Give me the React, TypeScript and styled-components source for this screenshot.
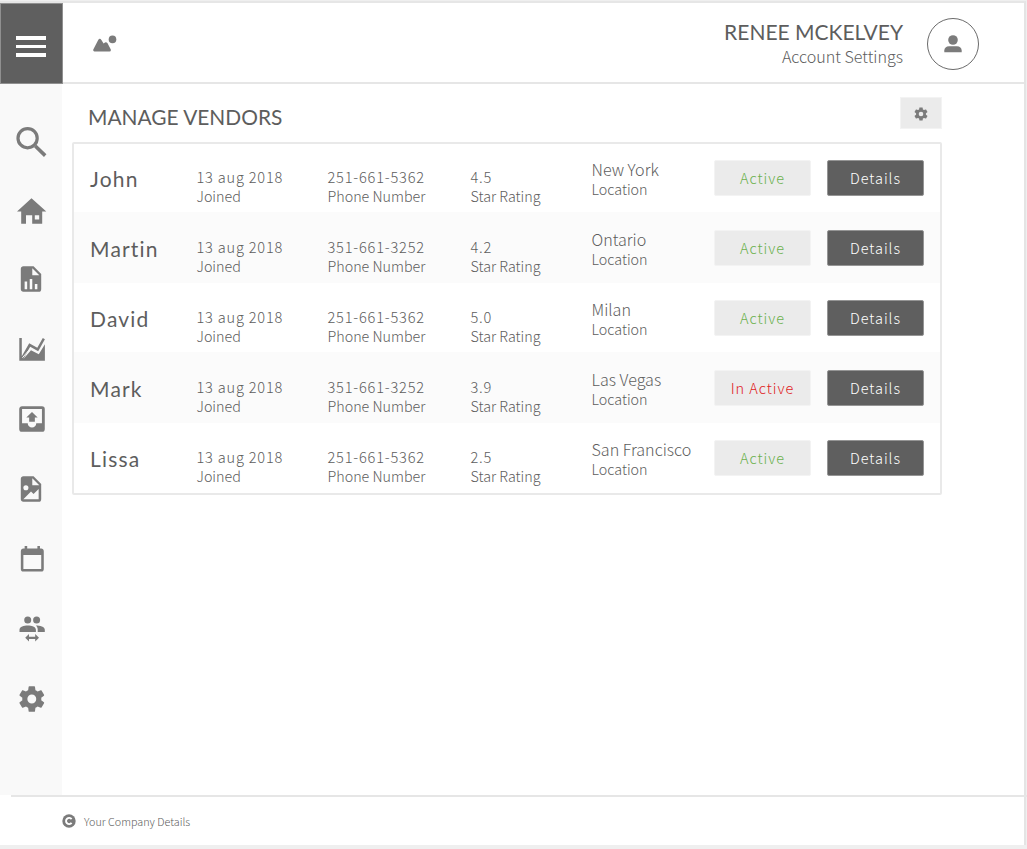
import React from "react";
import styled, { createGlobalStyle } from "styled-components";

const Global = createGlobalStyle`
  * { box-sizing: border-box; }
  body { margin: 0; background: #efefef; color: #5d5d5d; font-family: Lato, sans-serif; }
`;

const light = `font-family: "Noto Sans CJK SC", sans-serif; font-weight: 300;`;

const Frame = styled.div`
  width: 1027px;
  height: 849px;
  overflow: hidden;
  border-top: 1px solid #efefef;
  background: #efefef;
`;
const Page = styled.div`
  width: 1026px;
  height: 844px;
  border-top: 2px solid #e6e6e6;
  border-right: 2px solid #e4e4e4;
  background: #fff;
`;
const Header = styled.header`
  display: flex;
  height: 81px;
`;
const MenuButton = styled.button`
  display: flex;
  flex-direction: column;
  align-items: center;
  justify-content: center;
  gap: 5px;
  width: 63px;
  height: 81px;
  padding: 6px 1px 0 0;
  border: 1px solid #909090;
  background: #5f5f5f;
`;
const Bar = styled.span`
  width: 30px;
  height: 3.5px;
  background: #fff;
`;
const HeaderMain = styled.div`
  flex: 1;
  display: flex;
  padding-left: 30px;
  border-bottom: 2px solid #e6e6e6;
`;
const Logo = styled.svg`
  margin-top: 31px;
  fill: #7b7b7b;
`;
const Account = styled.div`
  margin-left: auto;
  padding-top: 15px;
  text-align: right;
`;
const UserName = styled.div`
  font-size: 21px;
  line-height: 28px;
  white-space: nowrap;
`;
const UserLink = styled.div`
  ${light}
  font-size: 16.1px;
  line-height: 21px;
  white-space: nowrap;
`;
const Avatar = styled.div`
  display: flex;
  align-items: center;
  justify-content: center;
  width: 52px;
  height: 52px;
  margin: 15px 45px 0 24px;
  border: 1px solid #6b6b6b;
  border-radius: 50%;
`;
const Body = styled.div`
  display: flex;
  height: 711px;
`;
const Sidebar = styled.nav`
  width: 62px;
  padding-top: 20px;
  background: #f9f9f9;
`;
const NavItem = styled.div`
  display: flex;
  align-items: center;
  justify-content: center;
  height: 70px;
  color: #7b7b7b;
`;
const Content = styled.main`
  width: 880px;
  padding-left: 10px;
`;
const TitleBar = styled.div`
  display: flex;
  justify-content: space-between;
  width: 870px;
  height: 58px;
  padding: 13px 0 0 16px;
`;
const Title = styled.h1`
  margin: 6px 0 0;
  font-size: 20.9px;
  line-height: 28px;
  font-weight: 400;
`;
const GearButton = styled.button`
  display: flex;
  align-items: center;
  justify-content: center;
  width: 42px;
  height: 32px;
  padding: 1px 0 0;
  border: 1px solid #f3f3f3;
  background: #ebebeb;
  color: #7b7b7b;
`;
const Table = styled.div`
  width: 870px;
  height: 353px;
  border: 2px solid #e9e9e9;
  border-radius: 2px;
`;
const Row = styled.div<{ $striped: boolean }>`
  display: flex;
  height: 70px;
  padding-left: 16px;
  background: ${(p) => (p.$striped ? "#fbfbfb" : "transparent")};
  box-shadow: ${(p) => (p.$striped ? "0 1px 0 #fbfbfb" : "none")};
  &:first-child { margin-top: -2px; }
`;
const Name = styled.div`
  width: 106.5px;
  padding-top: 23px;
  font-size: 21px;
  line-height: 28px;
  letter-spacing: 1.2px;
`;
const Cell = styled.div<{ $width: number }>`
  width: ${(p) => p.$width}px;
  padding-top: 25px;
  ${light}
  font-size: 14.3px;
  line-height: 19px;
  white-space: nowrap;
`;
const Figure = styled.div`
  font-size: 14.6px;
  letter-spacing: 0.8px;
`;
const PlaceCell = styled(Cell)`
  padding-top: 17px;
`;
const Place = styled.div`
  margin-bottom: -1px;
  font-size: 16.1px;
  line-height: 21px;
`;
const Pill = styled.button<{ $tone: "active" | "inactive" | "dark" }>`
  width: 97px;
  height: 36px;
  margin: 18px 16px 0 0;
  padding: 0 0 1px;
  border: 1px solid ${(p) => (p.$tone === "dark" ? "#959595" : "#f3f3f3")};
  border-radius: 2px;
  background: ${(p) => (p.$tone === "dark" ? "#5f5f5f" : "#ebebeb")};
  color: ${(p) => ({ active: "#6ab04c", inactive: "#e01b1b", dark: "#fff" })[p.$tone]};
  ${light}
  font-size: 14.5px;
  line-height: 20px;
  letter-spacing: 0.95px;
`;
const Footer = styled.footer`
  position: relative;
  display: flex;
  align-items: center;
  gap: 8px;
  width: 1016px;
  height: 50px;
  margin-left: 11px;
  padding: 0 0 0 51px;
  border-top: 2px solid #e6e6e6;
  ${light}
  font-size: 10.8px;
`;

const GEAR =
  "M12,15.5A3.5,3.5 0 0,1 8.5,12A3.5,3.5 0 0,1 12,8.5A3.5,3.5 0 0,1 15.5,12A3.5,3.5 0 0,1 12,15.5M19.43,12.97C19.47,12.65 19.5,12.33 19.5,12C19.5,11.67 19.47,11.34 19.43,11L21.54,9.37C21.73,9.22 21.78,8.95 21.66,8.73L19.66,5.27C19.54,5.05 19.27,4.96 19.05,5.05L16.56,6.05C16.04,5.66 15.5,5.32 14.87,5.07L14.5,2.42C14.46,2.18 14.25,2 14,2H10C9.75,2 9.54,2.18 9.5,2.42L9.13,5.07C8.5,5.32 7.96,5.66 7.44,6.05L4.95,5.05C4.73,4.96 4.46,5.05 4.34,5.27L2.34,8.73C2.21,8.95 2.27,9.22 2.46,9.37L4.57,11C4.53,11.34 4.5,11.67 4.5,12C4.5,12.33 4.53,12.65 4.57,12.97L2.46,14.63C2.27,14.78 2.21,15.05 2.34,15.27L4.34,18.73C4.46,18.95 4.73,19.03 4.95,18.95L7.44,17.94C7.96,18.34 8.5,18.68 9.13,18.93L9.5,21.58C9.54,21.82 9.75,22 10,22H14C14.25,22 14.46,21.82 14.5,21.58L14.87,18.93C15.5,18.67 16.04,18.34 16.56,17.94L19.05,18.95C19.27,19.03 19.54,18.95 19.66,18.73L21.66,15.27C21.78,15.05 21.73,14.78 21.54,14.63L19.43,12.97Z";
const FILE =
  "M13,9H18.5L13,3.5V9M6,2H14L20,8V20A2,2 0 0,1 18,22H6C4.89,22 4,21.1 4,20V4C4,2.89 4.89,2 6,2";

const icons: { id: string; art: React.ReactNode }[] = [
  {
    id: "search",
    art: (
      <g fill="none" stroke="currentColor">
        <circle cx="14.6" cy="17.2" r="9.6" strokeWidth="3.2" />
        <path d="M22.3 25L32.2 34.6" strokeWidth="3.6" />
      </g>
    ),
  },
  {
    id: "home",
    art: (
      <path
        fillRule="evenodd"
        d="M18.5 7.3L33.3 20.5H29.2V32.8H19.2V24.2H13V32.8H8.2V20.5H4ZM21.8 24.2V28.4H26.2V24.2Z"
      />
    ),
  },
  {
    id: "report",
    art: (
      <path
        transform="translate(18 18) scale(1.275) translate(-12 -12)"
        d={FILE + "M7,20H9V14H7V20M11,20H13V12H11V20M15,20H17V16H15V20Z"}
      />
    ),
  },
  {
    id: "chart",
    art: (
      <>
        <path d="M6.3 7H8.8V25.3L16.2 12.2L24.3 16.8L29.8 7L31.9 8.2L25.2 20.2L17.2 15.7L10.2 28.2L11 27.2L18 19.3L25.8 23.2L31.9 13.2V29.7H6.3Z" />
        <path d="M9.4 26.8L17.4 17.4L25.5 21.7L31.6 11.8" fill="none" stroke="#f9f9f9" strokeWidth="1" />
      </>
    ),
  },
  {
    id: "outbox",
    art: (
      <path
        transform="translate(19 18) scale(1.42) translate(-12 -12)"
        d="M14,14H10V11H8L12,7L16,11H14V14M5,15V5H19V15H15A3,3 0 0,1 12,18A3,3 0 0,1 9,15H5M19,3H5C3.89,3 3,3.9 3,5V19A2,2 0 0,0 5,21H19A2,2 0 0,0 21,19V5A2,2 0 0,0 19,3"
      />
    ),
  },
  {
    id: "image",
    art: (
      <path
        transform="translate(18 18) scale(1.275) translate(-12 -12)"
        d={FILE + "M6,20H18V12L14,16L12,14L6,20M8,9A2,2 0 0,0 6,11A2,2 0 0,0 8,13A2,2 0 0,0 10,11A2,2 0 0,0 8,9Z"}
      />
    ),
  },
  {
    id: "calendar",
    art: (
      <path
        transform="translate(19.3 17.8) scale(1.275) translate(-12 -11)"
        d="M19,19H5V8H19M16,1V3H8V1H6V3H5C3.89,3 3,3.89 3,5V19A2,2 0 0,0 5,21H19A2,2 0 0,0 21,19V5C21,3.89 20.1,3 19,3H18V1"
      />
    ),
  },
  {
    id: "users",
    art: (
      <>
        <circle cx="14.7" cy="9.1" r="3.5" />
        <circle cx="23.6" cy="9.1" r="3.5" />
        <path d="M6.5 21V18.7C6.5 15.8 11 14.5 14.7 14.5S22.9 15.8 22.9 18.7V21ZM24.7 21V18.5C24.7 16.7 23.9 15.4 22.9 14.5C26.9 14.5 31.8 15.8 31.8 18.7V21Z" />
        <path d="M12.2 26.8L16 23V25.7H22.2V23L26 26.8L22.2 30.6V27.9H16V30.6Z" />
      </>
    ),
  },
  {
    id: "settings",
    art: <path transform="translate(18.8 18) scale(1.27) translate(-12 -12)" d={GEAR} />,
  },
];

const vendors = [
  { name: "John", phone: "251-661-5362", rating: "4.5", place: "New York", active: true },
  { name: "Martin", phone: "351-661-3252", rating: "4.2", place: "Ontario", active: true },
  { name: "David", phone: "251-661-5362", rating: "5.0", place: "Milan", active: true },
  { name: "Mark", phone: "351-661-3252", rating: "3.9", place: "Las Vegas", active: false },
  { name: "Lissa", phone: "251-661-5362", rating: "2.5", place: "San Francisco", active: true },
];

export default function App() {
  return (
    <Frame>
      <Global />
      <Page>
        <Header>
          <MenuButton aria-label="Menu">
            <Bar />
            <Bar />
            <Bar />
          </MenuButton>
          <HeaderMain>
            <Logo width="24" height="18" viewBox="0 0 24 18">
              <path d="M.3 15.6L5.2 6Q6.8 3.6 8.4 6L10.6 9.6L12 8.4Q13.3 7.7 14.4 9L17.8 15.6Q18.1 17.5 16.6 17.5H1.4Q-.1 17.4 .3 15.6Z" />
              <circle cx="19.5" cy="5.4" r="3.8" />
            </Logo>
            <Account>
              <UserName>RENEE MCKELVEY</UserName>
              <UserLink>Account Settings</UserLink>
            </Account>
            <Avatar>
              <svg width="18" height="18" viewBox="0 0 18 18" fill="#7b7b7b">
                <circle cx="9" cy="5" r="4.8" />
                <path d="M.3 15.5C.3 12.8 2.3 11.2 5 11.2H13C15.7 11.2 17.7 12.8 17.7 15.5V17.2H.3Z" />
              </svg>
            </Avatar>
          </HeaderMain>
        </Header>
        <Body>
          <Sidebar>
            {icons.map((icon) => (
              <NavItem key={icon.id}>
                <svg width="36" height="36" viewBox="0 0 36 36" fill="currentColor">
                  {icon.art}
                </svg>
              </NavItem>
            ))}
          </Sidebar>
          <Content>
            <TitleBar>
              <Title>MANAGE VENDORS</Title>
              <GearButton aria-label="Table settings">
                <svg width="14" height="14" viewBox="1.4 1.4 21.2 21.2" fill="currentColor">
                  <path d={GEAR} />
                </svg>
              </GearButton>
            </TitleBar>
            <Table>
              {vendors.map((v, i) => (
                <Row key={v.name} $striped={i % 2 === 1}>
                  <Name>{v.name}</Name>
                  <Cell $width={131}>
                    <Figure>13 aug 2018</Figure>
                    <div>Joined</div>
                  </Cell>
                  <Cell $width={143}>
                    <Figure>{v.phone}</Figure>
                    <div>Phone Number</div>
                  </Cell>
                  <Cell $width={121}>
                    <Figure>{v.rating}</Figure>
                    <div>Star Rating</div>
                  </Cell>
                  <PlaceCell $width={122.5}>
                    <Place>{v.place}</Place>
                    <div>Location</div>
                  </PlaceCell>
                  <Pill $tone={v.active ? "active" : "inactive"}>{v.active ? "Active" : "In Active"}</Pill>
                  <Pill $tone="dark">Details</Pill>
                </Row>
              ))}
            </Table>
          </Content>
        </Body>
        <Footer>
          <svg width="14" height="14" viewBox="0 0 14 14">
            <circle cx="7" cy="7" r="6.7" fill="#7b7b7b" />
            <path d="M9.6 5.1A3.1 3.1 0 1 0 9.6 8.9" fill="none" stroke="#fff" strokeWidth="1.9" />
          </svg>
          <span>Your Company Details</span>
        </Footer>
      </Page>
    </Frame>
  );
}
